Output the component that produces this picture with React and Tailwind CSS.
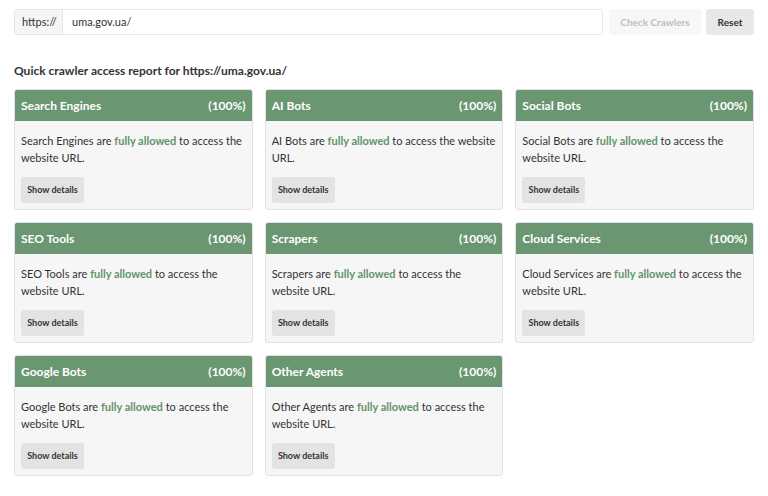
const cats = ['Search Engines','AI Bots','Social Bots','SEO Tools','Scrapers','Cloud Services','Google Bots','Other Agents']

function Card({ name }) {
  return (
    <div className="bg-[#f6f6f6] border border-[#e2e2e2] rounded-[3px] overflow-hidden h-[121px]">
      <div className="bg-[#6a9672] text-white font-bold text-[12px] flex items-center justify-between px-[6px] h-[31px]">
        <span>{name}</span><span>(100%)</span>
      </div>
      <div className="px-[6px] pt-[11px]">
        <p className="text-[11px] leading-[17px] text-[#333]">{name} are <span className="font-bold text-[#5f9468]">fully allowed</span> to access the website URL.</p>
        <button className="mt-[11px] bg-[#e3e3e3] rounded-[3px] w-[63px] h-[26px] text-[9px] font-bold text-[#333]">Show details</button>
      </div>
    </div>
  )
}

export default function App() {
  return (
    <div className="w-[768px] h-[496px] bg-white px-[14px] pt-[9px]" style={{ fontFamily: 'Lato, "Open Sans", sans-serif' }}>
      <div className="flex items-center gap-[5px]">
        <div className="flex flex-1 h-[26px] border border-[#e6e6e6] rounded-[3px] overflow-hidden">
          <div className="bg-[#f5f5f5] border-r border-[#e6e6e6] text-[11px] text-[#333] flex items-center px-[7px] w-[48px]">https://</div>
          <input defaultValue="uma.gov.ua/" className="flex-1 text-[11px] text-[#333] px-[9px] outline-none" />
        </div>
        <button className="h-[26px] w-[92px] bg-[#f7f7f7] rounded-[3px] text-[10px] font-bold text-[#bdbdbd] ml-[1px]">Check Crawlers</button>
        <button className="h-[26px] w-[48px] bg-[#e8e8e8] rounded-[3px] text-[10px] font-bold text-[#333]">Reset</button>
      </div>
      <h2 className="mt-[27px] text-[12px] font-bold text-[#333] leading-[17px]">Quick crawler access report for https://uma.gov.ua/</h2>
      <div className="mt-[10px] grid grid-cols-3 gap-x-[12px] gap-y-[12px]">
        {cats.map(c => <Card key={c} name={c} />)}
      </div>
    </div>
  )
}
